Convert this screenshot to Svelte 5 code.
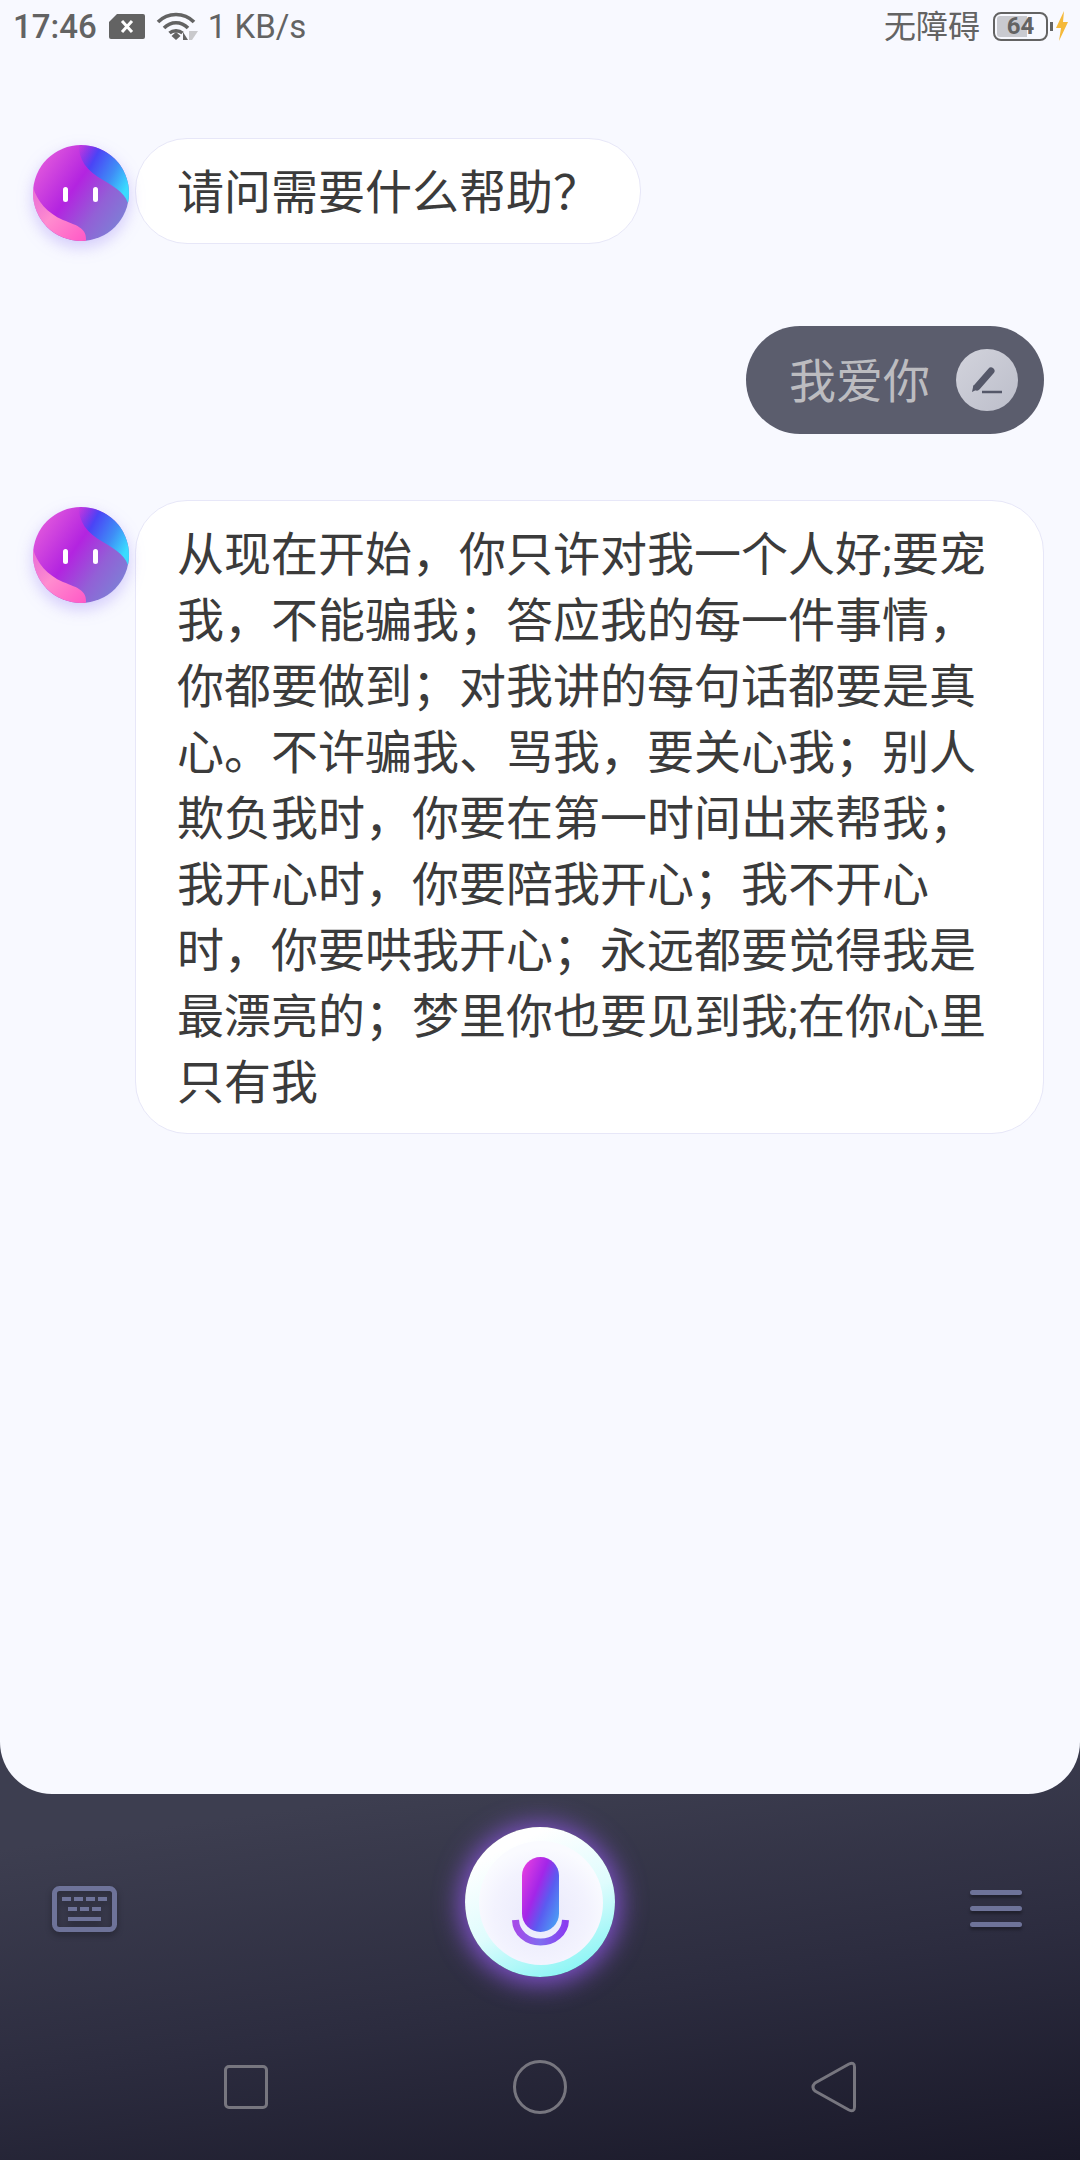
<script lang="ts">
  const answer =
    "从现在开始，你只许对我一个人好;要宠我，不能骗我；答应我的每一件事情，你都要做到；对我讲的每句话都要是真心。不许骗我、骂我，要关心我；别人欺负我时，你要在第一时间出来帮我；我开心时，你要陪我开心；我不开心时，你要哄我开心；永远都要觉得我是最漂亮的；梦里你也要见到我;在你心里只有我";
</script>

{#snippet avatar()}
  <svg class="avatar" viewBox="0 0 96 96" width="96" height="96">
    <defs>
      <linearGradient id="av-base" x1="0" y1="0.1" x2="1" y2="0.8">
        <stop offset="0" stop-color="#ea62dc" />
        <stop offset="0.45" stop-color="#b324e0" />
        <stop offset="0.72" stop-color="#9260d6" />
        <stop offset="1" stop-color="#7a84d6" />
      </linearGradient>
      <linearGradient id="av-blue" x1="0.05" y1="0" x2="1" y2="0.62">
        <stop offset="0" stop-color="#6a3cf0" stop-opacity="0.1" />
        <stop offset="0.3" stop-color="#4a44f6" />
        <stop offset="0.68" stop-color="#3f8cf6" />
        <stop offset="1" stop-color="#3adcff" />
      </linearGradient>
      <linearGradient id="av-pink" x1="0" y1="0" x2="1" y2="1">
        <stop offset="0" stop-color="#ff8fd0" stop-opacity="0.55" />
        <stop offset="0.45" stop-color="#ff8ccf" />
        <stop offset="1" stop-color="#ff58c6" />
      </linearGradient>
      <clipPath id="av-clip"><circle cx="48" cy="48" r="48" /></clipPath>
    </defs>
    <g clip-path="url(#av-clip)">
      <rect width="96" height="96" fill="url(#av-base)" />
      <path d="M46 0C45 14 54 26 70 35C84 43 94 50 96 62V0Z" fill="url(#av-blue)" />
      <path d="M0 42C4 56 14 68 30 75C46 81 54 84 53 96H0Z" fill="url(#av-pink)" />
    </g>
    <rect x="30" y="42" width="5" height="15" rx="2.5" fill="#fff" />
    <rect x="60" y="42" width="5" height="15" rx="2.5" fill="#fff" />
  </svg>
{/snippet}

<div class="app" lang="zh-CN">
  <main class="chat">
    <header class="status">
      <div class="status-left">
        <span class="time">17:46</span>
        <svg class="notif" viewBox="0 0 36 25" width="36" height="25">
          <path d="M8 0H34a2 2 0 0 1 2 2V23a2 2 0 0 1-2 2H2a2 2 0 0 1-2-2V8Z" fill="#636363" />
          <path d="M13 7L23 18M23 7L13 18" stroke="#fff" stroke-width="3" />
        </svg>
        <svg class="wifi" viewBox="0 0 42 30" width="42" height="30">
          <g fill="none" stroke="#636363" stroke-width="3.6">
            <path d="M2 11C12 1 28 1 38 11" />
            <path d="M8 17C15 10 25 10 32 17" />
            <path d="M13.500 22C17 19 23 19 26.500 22" />
          </g>
          <path d="M15.500 25L20 21L24.500 25L20 29Z" fill="#636363" />
          <path d="M27 29V21L32 29Z" fill="#636363" />
          <path d="M33 29V20L42 20L36 29Z" fill="#c9c9cc" />
        </svg>
        <span class="speed">1 KB/s</span>
      </div>
      <div class="status-right">
        <span class="access">无障碍</span>
        <div class="battery">
          <div class="battery-fill"></div>
          <span class="battery-num">64</span>
        </div>
        <span class="battery-nub"></span>
        <svg class="bolt" viewBox="0 0 12 30" width="12" height="30">
          <path d="M8 0L0 17H5L3 30L12 11H7Z" fill="#f5b93a" />
        </svg>
      </div>
    </header>

    <section class="messages">
      <div class="row">
        {@render avatar()}
        <div class="bubble">请问需要什么帮助？</div>
      </div>

      <div class="mine">
        <span>我爱你</span>
        <div class="edit">
          <svg viewBox="0 0 32 32" width="32" height="32">
            <path d="M6 23L20 7" stroke="#555869" stroke-width="7" stroke-linecap="round" />
            <path d="M1 28L2.500 21L7 25Z" fill="#555869" />
            <path d="M11 28H31" stroke="#555869" stroke-width="2.500" />
          </svg>
        </div>
      </div>

      <div class="row">
        {@render avatar()}
        <div class="bubble wide">{answer}</div>
      </div>
    </section>
  </main>

  <footer class="dock">
    <div class="actions">
      <svg class="keyboard" viewBox="0 0 65 46" width="65" height="46">
        <rect x="2.500" y="2.500" width="60" height="41" rx="5" fill="none" stroke="#6e7399" stroke-width="5" />
        <g fill="#6e7399">
          <rect x="10" y="11" width="9" height="4" />
          <rect x="22" y="11" width="9" height="4" />
          <rect x="34" y="11" width="9" height="4" />
          <rect x="46" y="11" width="9" height="4" />
          <rect x="16" y="21" width="9" height="4" />
          <rect x="28" y="21" width="9" height="4" />
          <rect x="40" y="21" width="9" height="4" />
          <rect x="16" y="31" width="33" height="4" />
        </g>
      </svg>

      <div class="mic">
        <svg viewBox="0 0 150 150" width="150" height="150">
          <defs>
            <linearGradient id="mic-body" x1="0" y1="0.1" x2="1" y2="0.9">
              <stop offset="0" stop-color="#e83fe0" />
              <stop offset="0.4" stop-color="#a326e8" />
              <stop offset="0.65" stop-color="#5a5cf0" />
              <stop offset="1" stop-color="#4aa6f5" />
            </linearGradient>
            <linearGradient id="mic-arc" x1="0" y1="0" x2="1" y2="0">
              <stop offset="0" stop-color="#a54be8" />
              <stop offset="0.5" stop-color="#7f6cf0" />
              <stop offset="1" stop-color="#8a3df0" />
            </linearGradient>
            <radialGradient id="mic-disc" cx="0.5" cy="0.6" r="0.55">
              <stop offset="0" stop-color="#e8e8fb" />
              <stop offset="0.7" stop-color="#f3f3fe" />
              <stop offset="1" stop-color="#fafbff" />
            </radialGradient>
          </defs>
          <circle cx="76" cy="76" r="62" fill="url(#mic-disc)" />
          <rect x="57" y="30" width="37" height="75" rx="18.500" fill="url(#mic-body)" />
          <path d="M50.500 93C51 106 62 115 75.500 115C89 115 100 106 100.500 93" fill="none" stroke="url(#mic-arc)" stroke-width="7" />
        </svg>
      </div>

      <div class="menu">
        <span></span>
        <span></span>
        <span></span>
      </div>
    </div>

    <nav class="navbar">
      <span class="nav-square"></span>
      <span class="nav-circle"></span>
      <svg viewBox="0 0 46 52" width="46" height="52">
        <path d="M4 22L38 3Q43.500 0.500 43.500 6V46Q43.500 51.500 38 49L4 30Q0 26 4 22Z" fill="none" stroke="#77767f" stroke-width="3" stroke-linejoin="round" />
      </svg>
    </nav>
  </footer>
</div>

<style>
  :global(body) {
    margin: 0;
  }

  .app {
    width: 1080px;
    height: 2160px;
    display: flex;
    flex-direction: column;
    overflow: hidden;
    font-family: Roboto, "Noto Sans CJK SC", sans-serif;
    background: linear-gradient(172deg, #3d3e50 80%, #2c2c3f 90%, #191828 100%);
  }

  .chat {
    height: 1794px;
    box-sizing: border-box;
    background: #f8f9ff;
    border-radius: 0 0 52px 52px;
  }

  .status {
    height: 52px;
    padding: 0 12px 0 13px;
    display: flex;
    align-items: center;
    justify-content: space-between;
    color: #636363;
  }

  .status-left,
  .status-right {
    display: flex;
    align-items: center;
  }

  .time,
  .speed {
    font-size: 33px;
  }

  .time {
    font-weight: 500;
    margin-right: 12px;
  }

  .notif {
    margin-right: 11px;
  }

  .wifi {
    margin-right: 10px;
  }

  .access {
    font-size: 32px;
    margin-right: 13px;
    padding-bottom: 4px;
  }

  .battery {
    position: relative;
    width: 55px;
    height: 29px;
    box-sizing: border-box;
    border: 2.500px solid #636363;
    border-radius: 8px;
    display: flex;
    align-items: center;
    justify-content: center;
    overflow: hidden;
  }

  .battery-fill {
    position: absolute;
    left: 2px;
    top: 2px;
    bottom: 2px;
    width: 30px;
    background: #c9cad0;
    border-radius: 3px 0 0 3px;
  }

  .battery-num {
    position: relative;
    font-weight: 700;
    font-size: 24px;
    line-height: 1;
  }

  .battery-nub {
    width: 3px;
    height: 9px;
    margin-left: 2px;
    background: #636363;
  }

  .bolt {
    margin-left: 3px;
  }

  .messages {
    padding: 86px 36px 0 33px;
    display: flex;
    flex-direction: column;
    align-items: flex-start;
  }

  .row {
    display: flex;
    align-items: flex-start;
    gap: 6px;
  }

  .avatar {
    flex: none;
    margin-top: 7px;
    filter: drop-shadow(0 6px 8px rgba(110, 80, 240, 0.28));
  }

  .bubble {
    box-sizing: border-box;
    padding: 21px 40px 17px 41px;
    background: #fff;
    border: 1px solid #e7e7f8;
    border-radius: 52px;
    color: #3b3b3b;
    font-size: 47px;
    line-height: 66px;
  }

  .wide {
    width: 909px;
  }

  .mine {
    align-self: flex-end;
    height: 108px;
    box-sizing: border-box;
    margin: 82px 0 66px;
    padding: 0 26px 0 43px;
    display: flex;
    align-items: center;
    gap: 26px;
    background: #5b5d6d;
    border-radius: 54px;
    color: #bcbcc0;
    font-size: 47px;
  }

  .mine span {
    padding-bottom: 6px;
  }

  .edit {
    width: 62px;
    height: 62px;
    border-radius: 50%;
    display: flex;
    align-items: center;
    justify-content: center;
    background: linear-gradient(135deg, #d2d3dc, #bcbeca);
  }

  .dock {
    flex: 1;
    display: flex;
    flex-direction: column;
  }

  .actions {
    padding: 33px 58px 0 52px;
    display: grid;
    grid-template-columns: 1fr 150px 1fr;
    align-items: center;
    height: 150px;
  }

  .keyboard {
    margin-top: 13px;
    filter: drop-shadow(0 3px 3px rgba(0, 0, 0, 0.3));
  }

  .mic {
    width: 150px;
    height: 150px;
    margin-left: 3px;
    border-radius: 50%;
    background: linear-gradient(155deg, #ffffff 18%, #dffcfd 55%, #8ef5f5 88%, #6ff0f0 100%);
    box-shadow: 0 2px 26px 5px rgba(150, 90, 240, 0.8);
  }

  .mic svg {
    display: block;
  }

  .menu {
    justify-self: end;
    width: 52px;
    margin-top: 12px;
    display: flex;
    flex-direction: column;
    gap: 11px;
  }

  .menu span {
    height: 5px;
    border-radius: 3px;
    background: #6e7399;
    box-shadow: 0 3px 3px rgba(0, 0, 0, 0.3);
  }

  .navbar {
    margin-top: 80px;
    padding: 0 223px 0 224px;
    height: 60px;
    display: flex;
    align-items: center;
    justify-content: space-between;
  }

  .nav-square {
    width: 44px;
    height: 44px;
    box-sizing: border-box;
    border: 3px solid #77767f;
    border-radius: 5px;
  }

  .nav-circle {
    width: 54px;
    height: 54px;
    box-sizing: border-box;
    border: 3px solid #77767f;
    border-radius: 50%;
  }
</style>
